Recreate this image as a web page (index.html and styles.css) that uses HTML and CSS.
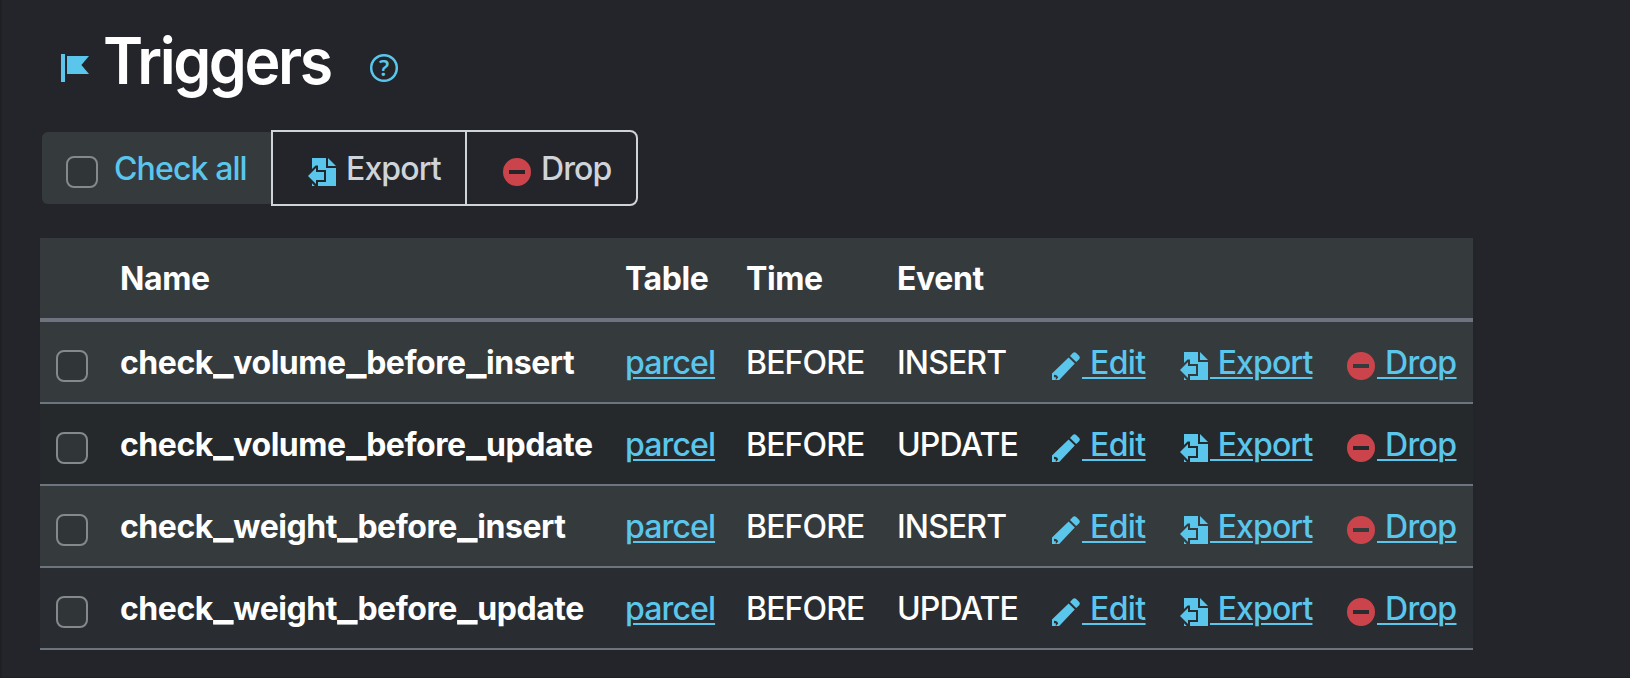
FILE: index.html
```
<!DOCTYPE html>
<html lang="en">
<head>
<meta charset="utf-8">
<title>Triggers</title>
<link rel="stylesheet" href="styles.css">
</head>
<body>
<svg class="sprite" aria-hidden="true">
  <symbol id="flag" viewBox="0 0 16 16"><path fill="#5bc6ec" d="M1 1h2v14H1zM4 2h11l-3.8 4.5L15 11H4z"/></symbol>
  <symbol id="pencil" viewBox="0 0 16 16"><path fill="#5bc6ec" fill-rule="evenodd" d="M9.3 3.7l3.1 3.1L4.6 15H1v-3.3zM2 12.4v1.2h.9V15l1.2-1.2-.5-.9-.7-.4zM10 3l1.4-1.5q.8-.8 1.7 0l1.5 1.5q.7.8 0 1.6L13.1 6z"/></symbol>
  <symbol id="export" viewBox="0 0 16 16"><path fill="#5bc6ec" d="M3 1h7v5h5v9H6v-2h4V7H6V4.7H4.8L3 6.5zM11 1l4 4h-4zM1 10l4-4v2h4v4H5v2zM3 13.6L4.4 15H3z"/></symbol>
  <symbol id="minus" viewBox="0 0 16 16"><path fill="#cc444b" fill-rule="evenodd" d="M8 1a7 7 0 1 1 0 14A7 7 0 0 1 8 1zM4 7v2h8V7z"/></symbol>
</svg>
<main class="page">
  <h1 class="title">
    <svg class="icon"><use href="#flag"/></svg>
    <span class="title-text">Triggers</span>
    <svg class="icon help" viewBox="0 0 32 32"><circle cx="16" cy="16" r="12.8" fill="none" stroke="#5bc6ec" stroke-width="2.5"/><text class="help-mark" x="16" y="24" text-anchor="middle">?</text></svg>
  </h1>
  <div class="toolbar">
    <label class="check-all"><span class="box"></span><span class="check-text">Check all</span></label>
    <button class="btn btn-export"><svg class="icon"><use href="#export"/></svg><span class="btn-text">Export</span></button>
    <button class="btn btn-drop"><svg class="icon"><use href="#minus"/></svg><span class="btn-text">Drop</span></button>
  </div>
  <table class="grid">
    <colgroup><col class="c1"><col class="c2"><col class="c3"><col class="c4"><col class="c5"><col class="c6"><col class="c7"><col class="c8"></colgroup>
    <thead><tr><th></th><th>Name</th><th>Table</th><th>Time</th><th>Event</th><th></th><th></th><th></th></tr></thead>
    <tbody>
      <tr class="odd"><td><span class="box"></span></td><td class="name">check<i>_</i>volume<i>_</i>before<i>_</i>insert</td><td><a>parcel</a></td><td>BEFORE</td><td>INSERT</td>
        <td><div class="act"><svg class="icon"><use href="#pencil"/></svg><a class="short">&nbsp;Edit</a></div></td><td><div class="act"><svg class="icon"><use href="#export"/></svg><a>&nbsp;Export</a></div></td><td><div class="act"><svg class="icon"><use href="#minus"/></svg><a class="short">&nbsp;Drop</a></div></td></tr>
      <tr class="hover"><td><span class="box"></span></td><td class="name">check<i>_</i>volume<i>_</i>before<i>_</i>update</td><td><a>parcel</a></td><td>BEFORE</td><td>UPDATE</td>
        <td><div class="act"><svg class="icon"><use href="#pencil"/></svg><a class="short">&nbsp;Edit</a></div></td><td><div class="act"><svg class="icon"><use href="#export"/></svg><a>&nbsp;Export</a></div></td><td><div class="act"><svg class="icon"><use href="#minus"/></svg><a class="short">&nbsp;Drop</a></div></td></tr>
      <tr class="odd"><td><span class="box"></span></td><td class="name">check<i>_</i>weight<i>_</i>before<i>_</i>insert</td><td><a>parcel</a></td><td>BEFORE</td><td>INSERT</td>
        <td><div class="act"><svg class="icon"><use href="#pencil"/></svg><a class="short">&nbsp;Edit</a></div></td><td><div class="act"><svg class="icon"><use href="#export"/></svg><a>&nbsp;Export</a></div></td><td><div class="act"><svg class="icon"><use href="#minus"/></svg><a class="short">&nbsp;Drop</a></div></td></tr>
      <tr class="even"><td><span class="box"></span></td><td class="name">check<i>_</i>weight<i>_</i>before<i>_</i>update</td><td><a>parcel</a></td><td>BEFORE</td><td>UPDATE</td>
        <td><div class="act"><svg class="icon"><use href="#pencil"/></svg><a class="short">&nbsp;Edit</a></div></td><td><div class="act"><svg class="icon"><use href="#export"/></svg><a>&nbsp;Export</a></div></td><td><div class="act"><svg class="icon"><use href="#minus"/></svg><a class="short">&nbsp;Drop</a></div></td></tr>
    </tbody>
  </table>
</main>
</body>
</html>
```
FILE: styles.css
```
* { box-sizing: border-box; }
html, body { height: 678px; overflow: hidden; }
body { margin: 0; background: #24252a; color: #fff; font: 450 32px/48px Inter, "Liberation Sans", sans-serif; letter-spacing: -0.88px; }
.sprite { display: none; }
.page { height: 678px; padding: 22px 0 0 38px; border-left: 2px solid #1f2024; border-bottom: 1px solid #1f2024; overflow: hidden; }
.icon { display: block; width: 32px; height: 32px; flex: none; }
.title { display: flex; align-items: flex-start; height: 108px; margin: 0; padding-left: 19px; font-size: 64px; font-weight: 600; line-height: 77px; letter-spacing: -2.5px; }
.title .icon { margin-top: 30px; }
.title-text { width: 264px; margin-left: 12px; white-space: nowrap; transform: scaleX(.95); transform-origin: 0 50%; }
.title .help { margin-left: 1px; }
.help-mark { font: 600 22px "Noto Sans", sans-serif; fill: #5bc6ec; letter-spacing: 0; }
.toolbar { display: flex; height: 76px; margin-left: 2px; }
.check-all { display: flex; width: 229px; height: 72px; margin-top: 2px; padding: 12px 0 0 24px; background: #353a3d; border-radius: 6px 0 0 6px; color: #5bc6ec; }
.box { display: block; width: 32px; height: 32px; border: 2px solid #86898b; border-radius: 8px; background: #303538; }
.check-all .box { margin: 12px 16px 0 0; }
.check-text { white-space: nowrap; line-height: 50px; }
.btn { display: flex; height: 76px; padding: 12px 0 0 34px; border: 2px solid #ced4da; background: transparent; color: #ced4da; font: inherit; line-height: 50px; letter-spacing: inherit; text-align: left; }
.btn .icon { margin-top: 12px; }
.btn-text { margin-left: 8px; white-space: nowrap; }
.btn-export { width: 196px; padding-left: 33px; }
.btn-drop { width: 173px; margin-left: -2px; border-radius: 0 8px 8px 0; }
.grid { width: 1433px; margin-top: 32px; border-collapse: separate; border-spacing: 0; table-layout: fixed; }
.c1 { width: 64px; } .c2 { width: 505px; } .c3 { width: 121px; } .c4 { width: 151px; }
.c5 { width: 153px; } .c6 { width: 128px; } .c7 { width: 167px; } .c8 { width: 144px; }
th, td { height: 82px; padding: 17px 16px 15px; text-align: left; vertical-align: top; white-space: nowrap; border-bottom: 2px solid #6c757d; }
th { height: 84px; background: #353a3d; border-bottom: 4px solid #6e737e; font-weight: 700; letter-spacing: -0.4px; }
.odd { background: #353a3d; }
.hover { background: #25292b; }
.even { background: #292c31; }
td .box { margin-top: 11px; }
.name { font-weight: 700; letter-spacing: -0.47px; }
/* full-width underscore that joins the neighbouring letters */
.name i { display: inline-block; width: 20.5px; font-style: normal; font-weight: 900; letter-spacing: 0; transform: scaleX(1.3); transform-origin: 0 50%; }
a { color: #5bc6ec; text-decoration: underline; text-decoration-thickness: 2px; text-underline-offset: 3px; }
.short { letter-spacing: -0.6px; }
.act { display: flex; }
.act .icon { margin-top: 11px; }
```
